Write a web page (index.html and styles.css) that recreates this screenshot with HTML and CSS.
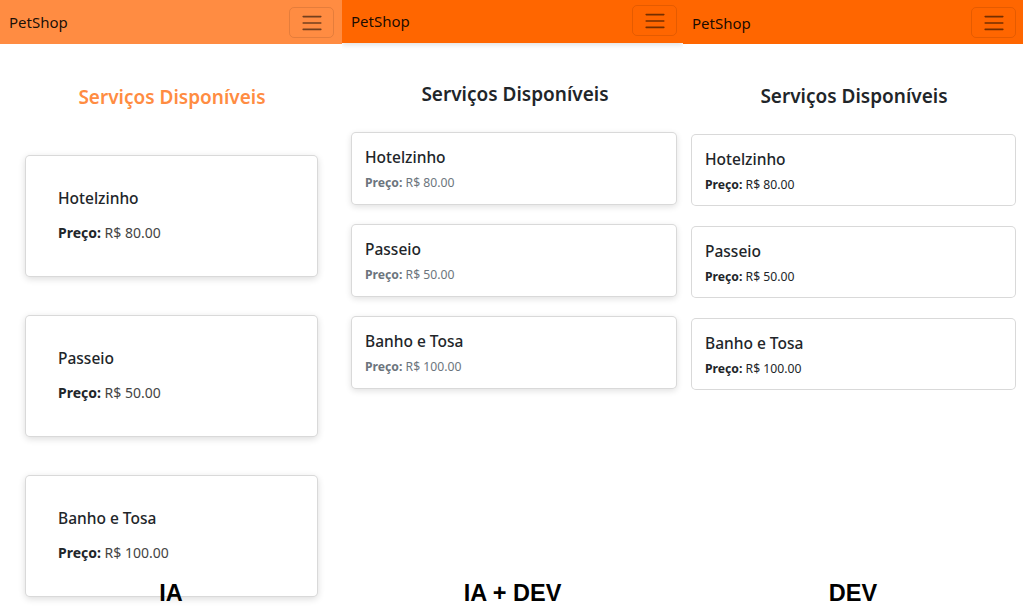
FILE: index.html
```html
<!DOCTYPE html>
<html lang="pt-BR">
<head>
<meta charset="utf-8">
<title>PetShop – Serviços</title>
<link rel="stylesheet" href="styles.css">
</head>
<body>
<div class="screen">
  <section class="panel panel-ia">
    <nav class="navbar">
      <span class="brand">PetShop</span>
      <button class="toggler" aria-label="menu"><svg viewBox="0 0 30 30" width="24" height="24"><path d="M4 7h22M4 15h22M4 23h22"/></svg></button>
    </nav>
    <main class="content">
      <h2 class="heading">Serviços Disponíveis</h2>
      <div class="cards">
        <article class="card"><h3 class="card-title">Hotelzinho</h3><p class="price"><strong>Preço:</strong> R$ 80.00</p></article>
        <article class="card"><h3 class="card-title">Passeio</h3><p class="price"><strong>Preço:</strong> R$ 50.00</p></article>
        <article class="card"><h3 class="card-title">Banho e Tosa</h3><p class="price"><strong>Preço:</strong> R$ 100.00</p></article>
      </div>
    </main>
    <div class="label">IA</div>
  </section>

  <section class="panel panel-mix">
    <nav class="navbar">
      <span class="brand">PetShop</span>
      <button class="toggler" aria-label="menu"><svg viewBox="0 0 30 30" width="24" height="24"><path d="M4 7h22M4 15h22M4 23h22"/></svg></button>
    </nav>
    <main class="content">
      <h2 class="heading">Serviços Disponíveis</h2>
      <div class="cards">
        <article class="card"><h3 class="card-title">Hotelzinho</h3><p class="price"><strong>Preço:</strong> R$ 80.00</p></article>
        <article class="card"><h3 class="card-title">Passeio</h3><p class="price"><strong>Preço:</strong> R$ 50.00</p></article>
        <article class="card"><h3 class="card-title">Banho e Tosa</h3><p class="price"><strong>Preço:</strong> R$ 100.00</p></article>
      </div>
    </main>
    <div class="label">IA + DEV</div>
  </section>

  <section class="panel panel-dev">
    <nav class="navbar">
      <span class="brand">PetShop</span>
      <button class="toggler" aria-label="menu"><svg viewBox="0 0 30 30" width="24" height="24"><path d="M4 7h22M4 15h22M4 23h22"/></svg></button>
    </nav>
    <main class="content">
      <h2 class="heading">Serviços Disponíveis</h2>
      <div class="cards">
        <article class="card"><h3 class="card-title">Hotelzinho</h3><p class="price"><strong>Preço:</strong> R$ 80.00</p></article>
        <article class="card"><h3 class="card-title">Passeio</h3><p class="price"><strong>Preço:</strong> R$ 50.00</p></article>
        <article class="card"><h3 class="card-title">Banho e Tosa</h3><p class="price"><strong>Preço:</strong> R$ 100.00</p></article>
      </div>
    </main>
    <div class="label">DEV</div>
  </section>
</div>
</body>
</html>
```

FILE: styles.css
```css
* { box-sizing: border-box; }

html, body {
  margin: 0;
  padding: 0;
  background: #fff;
}

body {
  font-family: "Noto Sans", "Open Sans", sans-serif;
  color: #212529;
  width: 1023px;
  height: 613px;
  overflow: hidden;
}

.screen {
  display: flex;
  width: 1023px;
  height: 613px;
}

.panel {
  position: relative;
  display: flex;
  flex-direction: column;
  height: 613px;
  overflow: hidden;
}

.panel-ia { width: 342px; }
.panel-mix { width: 341px; }
.panel-dev { width: 340px; }

/* Navbar */
.navbar {
  display: flex;
  align-items: center;
  justify-content: space-between;
  height: 44px;
  padding: 0 8px 0 8px;
  background: #ff6600;
  flex: none;
}

.brand {
  font-size: 15px;
  color: rgba(0, 0, 0, 0.9);
  line-height: 1;
  padding-left: 1px;
}

.toggler {
  width: 45px;
  height: 31px;
  padding: 0;
  display: flex;
  align-items: center;
  justify-content: center;
  background: transparent;
  border: 1px solid rgba(0, 0, 0, 0.1);
  border-radius: 5px;
}

.toggler svg path {
  fill: none;
  stroke: rgba(0, 0, 0, 0.55);
  stroke-width: 2;
  stroke-linecap: round;
}

.panel-ia .navbar { background: #ff8c42; }
.panel-ia .toggler { margin-top: 1px; }

.panel-mix .navbar {
  height: 43px;
  padding-right: 6px;
  position: relative;
  z-index: 1;
  box-shadow: 0 2px 5px rgba(0, 0, 0, 0.12);
}
.panel-mix .toggler { margin-top: -2px; }

.panel-dev .navbar { padding-right: 7px; }
.panel-dev .brand { margin-top: 2px; }
.panel-dev .toggler { margin-top: 1px; }

/* Content */
.content {
  display: flex;
  flex-direction: column;
}

.heading {
  margin: 0;
  text-align: center;
  font-size: 19px;
  font-weight: 600;
  line-height: 1.2;
}

.cards {
  display: flex;
  flex-direction: column;
}

.card {
  background: #fff;
  border: 1px solid rgba(0, 0, 0, 0.15);
  border-radius: 5px;
}

.card-title {
  margin: 0;
  font-size: 15.5px;
  font-weight: 500;
  line-height: 1.2;
}

.price {
  margin: 0;
  line-height: 1.5;
}

.price strong { font-weight: 700; }

/* Panel IA */
.panel-ia .content { padding: 42px 24px 0 25px; }
.panel-ia .heading { color: #ff8c42; margin-bottom: 46px; padding-left: 1px; }
.panel-ia .cards { gap: 38px; }
.panel-ia .card {
  height: 122px;
  padding: 33px 32px 32px;
  box-shadow: 0 2px 7px rgba(0, 0, 0, 0.14);
}
.panel-ia .price {
  font-size: 14px;
  margin-top: 15px;
  color: #444;
}
.panel-ia .price strong { color: #212529; }

/* Panel IA + DEV */
.panel-mix .content { padding: 40px 6px 0 9px; }
.panel-mix .heading { margin-bottom: 26px; padding-left: 2px; }
.panel-mix .cards { gap: 19px; }
.panel-mix .card {
  height: 73px;
  padding: 15px 13px 8px;
  box-shadow: 0 2px 6px rgba(0, 0, 0, 0.12);
}
.panel-mix .price {
  font-size: 12.2px;
  margin-top: 8px;
  color: #6c757d;
}

/* Panel DEV */
.panel-dev .content { padding: 41px 7px 0 8px; }
.panel-dev .heading { margin-bottom: 26px; padding-left: 1px; }
.panel-dev .cards { gap: 20px; }
.panel-dev .card {
  height: 72px;
  padding: 15px 13px 8px;
}
.panel-dev .price {
  font-size: 12.2px;
  margin-top: 8px;
  color: #212529;
}

/* Comparison labels */
.label {
  position: absolute;
  left: 0;
  right: 0;
  top: 581px;
  text-align: center;
  font-family: "Liberation Sans", Arial, sans-serif;
  font-weight: 700;
  font-size: 23.5px;
  line-height: 24px;
  color: #000;
  z-index: 2;
}
```
